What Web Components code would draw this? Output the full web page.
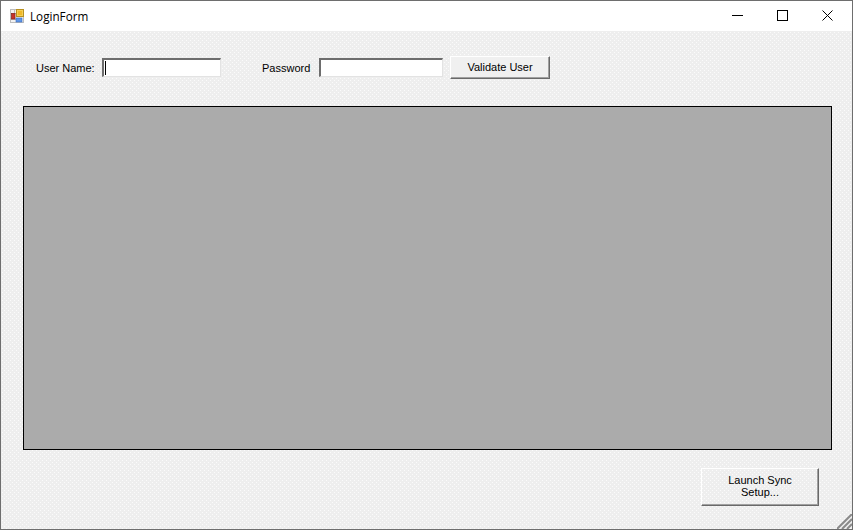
<!DOCTYPE html>
<html><head><meta charset="utf-8"><style>
html,body{margin:0;padding:0;width:853px;height:530px;overflow:hidden;background:#f0f0f0}
</style></head><body>
<login-form></login-form>
<script>
const def=(name,html)=>customElements.define(name,class extends HTMLElement{constructor(){super();this.attachShadow({mode:'open'}).innerHTML=html;}});
def('title-bar',`<style>
:host{display:flex;align-items:center;height:30px;background:#fff;font:11.7px "Open Sans","Noto Sans",sans-serif;color:#000;padding-right:2px}
svg{display:block}
.icon{margin-left:9px;margin-right:6px;margin-top:-1px;width:14px;height:14px}
.t{flex:1;margin-top:-1px}
.cap{width:45px;height:30px;display:flex;align-items:center;justify-content:center;padding-bottom:1px;box-sizing:border-box}
</style>
<svg class="icon" viewBox="0 0 14 14"><rect x=".5" y=".5" width="13" height="13" fill="#f2f2f2" stroke="#bdbdbd"/><path d="M.5 4.500h6M4.500 .5v5M.5 10.500h6M6.500 10v3.500" stroke="#bdbdbd" fill="none"/><rect x="6.500" y=".5" width="7" height="7" fill="#f5cf55" stroke="#b8901f"/><rect x="8" y="2" width="4" height="4" fill="#f0b828"/><rect x="1.500" y="4.500" width="3.500" height="5.500" fill="#c8322a" stroke="#8c2a22" stroke-width=".8"/><rect x="6" y="9" width="6" height="4" fill="#5f96e8" stroke="#3d6cb8" stroke-width=".6"/></svg>
<span class="t">LoginForm</span>
<span class="cap"><svg width="11" height="11" viewBox="0 0 11 11"><path d="M0 5.500h11" stroke="#000" stroke-width="1" shape-rendering="crispEdges"/></svg></span>
<span class="cap"><svg width="11" height="11" viewBox="0 0 11 11"><rect x=".5" y=".5" width="10" height="10" fill="none" stroke="#000"/></svg></span>
<span class="cap"><svg width="11" height="11" viewBox="0 0 11 11"><path d="M.5 .5l10 10M10.500 .5l-10 10" stroke="#000" stroke-width="1" fill="none"/></svg></span>`);
def('win-label',`<style>:host{display:block;font:11px "Liberation Sans",Arial,sans-serif;color:#000;white-space:nowrap}</style><slot></slot>`);
def('win-input',`<style>
:host{display:block;box-sizing:border-box;height:19px;background:#fff;border:1px solid #e3e3e3;border-color:#6d6d6d #e3e3e3 #e3e3e3 #6d6d6d;border-top-width:2px;border-left-width:2px;position:relative}
.caret{position:absolute;left:1px;top:1px;width:1px;height:14px;background:#000;display:none}
:host([focused]) .caret{display:block}
</style><span class="caret"></span>`);
def('win-button',`<style>
:host{display:flex;box-sizing:border-box;align-items:center;justify-content:center;text-align:center;font:11px/12px "Liberation Sans",Arial,sans-serif;color:#000;background:#f0f0f0;border:1px solid;border-color:#fff #696969 #696969 #fff;box-shadow:inset -1px -1px 0 #a0a0a0;padding-bottom:1px}
:host([tall]){padding-bottom:3px;background:transparent}
</style><span><slot></slot></span>`);
def('dark-panel',`<style>:host{display:block;box-sizing:border-box;height:344px;background:#ababab;border:1px solid #000}</style>`);
def('size-grip',`<style>:host{display:block;position:absolute;right:0;bottom:0;width:15px;height:15px}svg{display:block}</style>
<svg width="15" height="15" viewBox="0 0 15 15"><path d="M15 0L0 15M15 5L5 15M15 10L10 15" stroke="#8a8a8a" stroke-width="2" fill="none"/></svg>`);
def('login-form',`<style>
:host{display:flex;flex-direction:column;box-sizing:border-box;width:853px;height:530px;border:1px solid #6e6e6e;background:#f0f0f0;position:relative}
.client{flex:1;display:flex;flex-direction:column;padding:27px 20px 0 22px;background-color:#eeeeee;background-image:radial-gradient(circle at 1.500px 1.500px,#fbfbfb .6px,transparent 1px),radial-gradient(circle at 3.500px 3.500px,#fbfbfb .6px,transparent 1px);background-size:4px 4px}
.row{display:flex;align-items:center;height:19px}
.r2{margin-top:29px}
.foot{display:flex;justify-content:flex-end;margin-top:18px;padding-right:13px}
.l1{margin-left:13px;width:58px}
.l2{margin-left:41px;width:49px}
#u{width:119px;margin-left:8px}
#p{width:124px;margin-left:8px}
#v{width:100px;height:23px;margin-left:7px}
#s{width:118px;height:38px}
</style>
<title-bar></title-bar>
<div class="client">
<div class="row"><win-label class="l1">User Name:</win-label><win-input id="u" focused></win-input><win-label class="l2">Password</win-label><win-input id="p"></win-input><win-button id="v">Validate User</win-button></div>
<dark-panel class="r2"></dark-panel>
<div class="foot"><win-button id="s" tall>Launch Sync<br>Setup...</win-button></div>
</div>
<size-grip></size-grip>`);
</script>
</body></html>
